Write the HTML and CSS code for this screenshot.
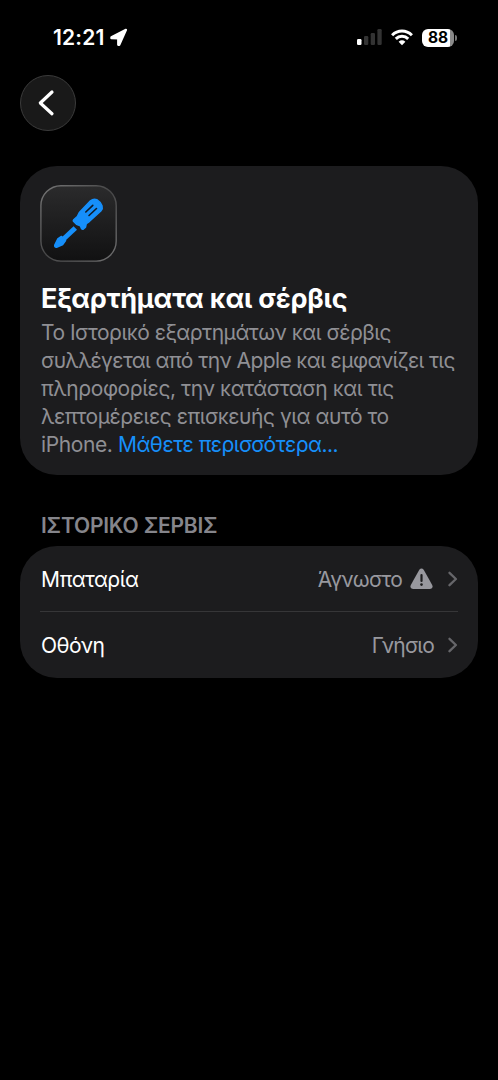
FILE: index.html
```html
<!DOCTYPE html>
<html lang="el">
<head>
<meta charset="utf-8">
<meta name="viewport" content="width=device-width, initial-scale=1">
<title>Εξαρτήματα και σέρβις</title>
<link rel="stylesheet" href="styles.css">
</head>
<body>
<header class="status">
  <div class="status-left">
    <span class="clock">12:21</span>
    <svg class="location" width="18" height="19" viewBox="0 0 18 19"><path d="M1.400 9.200 16 1.800 9.300 16.800 8.200 16.800 8.200 10.400 1.400 10.200Z" fill="#fff" stroke="#fff" stroke-width="2.200" stroke-linejoin="round"/></svg>
  </div>
  <div class="status-right">
    <svg class="signal" width="25" height="17" viewBox="0 0 25 17"><rect y="10" width="4.500" height="6" rx="1.200" fill="#fff"/><g fill="#333"><rect x="7" y="7" width="4.300" height="9" rx="1.200"/><rect x="13.700" y="4" width="4.300" height="12" rx="1.200"/><rect x="20.400" y="0" width="4.300" height="16" rx="1.200"/></g></svg>
    <svg class="wifi" width="22" height="17" viewBox="0 0 22 17"><g fill="none" stroke="#fff" stroke-width="3"><path d="M1.100 6.200Q5.400 2 11 2T20.900 6.200"/><path d="M4.800 9.900Q7.400 7.300 11 7.300T17.200 9.900"/></g><path d="M7.600 12.700Q11 9.900 14.400 12.700L11 16.200Z" fill="#fff"/></svg>
    <div class="battery"><span class="battery-level">88</span></div>
    <span class="battery-tip"></span>
  </div>
</header>
<nav class="nav">
  <button class="back" aria-label="Πίσω"><svg width="54" height="54" viewBox="0 0 54 54"><path d="M31 16 19.300 27 31 37.700" fill="none" stroke="#fff" stroke-width="3.200" stroke-linecap="round" stroke-linejoin="round"/></svg></button>
</nav>
<main class="content">
  <section class="card intro">
    <svg class="app-icon" width="77" height="77" viewBox="0 0 77 77">
      <defs>
        <linearGradient id="face" x1="0" y1="0" x2="0" y2="1"><stop offset="0" stop-color="#2b2b2c"/><stop offset="1" stop-color="#111112"/></linearGradient>
        <linearGradient id="rim" x1="0" y1="0" x2="1" y2="1"><stop offset="0" stop-color="#777"/><stop offset=".5" stop-color="#464647"/><stop offset="1" stop-color="#707071"/></linearGradient>
      </defs>
      <rect x=".9" y=".7" width="75.300" height="75.400" rx="20" fill="url(#face)" stroke="url(#rim)" stroke-width="1.400"/>
      <g fill="#168ffa" stroke="#168ffa" stroke-linejoin="round">
        <path d="M35.300 43 23 54.500" stroke-width="5"/>
        <path d="M21.500 51.500 17.800 54 14.800 60.200Q14.600 62.400 16.500 62.200L22.800 59.400 25.500 55.500Z" stroke-width="1.600"/>
        <path d="M33.500 36.300Q33 35.500 33.700 34.700L37.300 31.500 39.300 27.500 50.500 15.800Q53.500 13.300 56.800 14.700 60.500 17 62 20.700 63 23.400 60.800 26L49 36.800 46.300 38.500 45.500 42.200 43.400 44Q42.400 44.600 41.500 43.500L40.300 40.800 36.500 39.300Z" stroke-width="1.500"/>
      </g>
      <path d="M45.800 27 52.800 20.300M49 30.500 56.500 23.500" stroke="#101a25" stroke-width="1.600" stroke-linecap="round"/>
    </svg>
    <h1 class="title">Εξαρτήματα και σέρβις</h1>
    <p class="description">
      <span class="line line-one">Το Ιστορικό εξαρτημάτων και σέρβις</span>
      <span class="line line-two">συλλέγεται από την Apple και εμφανίζει τις</span>
      <span class="line line-three">πληροφορίες, την κατάσταση και τις</span>
      <span class="line line-four">λεπτομέρειες επισκευής για αυτό το</span>
      <span class="line line-five">iPhone. <a class="link">Μάθετε περισσότερα...</a></span>
    </p>
  </section>
  <h2 class="section-title">ΙΣΤΟΡΙΚΟ ΣΕΡΒΙΣ</h2>
  <section class="card list">
    <div class="row">
      <span class="label">Μπαταρία</span>
      <span class="value">Άγνωστο</span>
      <svg class="warning" width="23" height="22" viewBox="0 0 23 22"><path d="M9.300 1.700Q11.500-.9 13.700 1.700L22.200 17Q23.600 20.600 20 21H3Q-.6 20.600.8 17Z" fill="#98989e"/><path d="M11.500 7v6" stroke="#1d1d1f" stroke-width="2.200" stroke-linecap="round"/><circle cx="11.500" cy="16.600" r="1.300" fill="#1d1d1f"/></svg>
      <svg class="chevron" width="10" height="16" viewBox="0 0 10 16"><path d="M1.500 1.800 7.900 8 1.500 14.200" fill="none" stroke="#66666a" stroke-width="2.300" stroke-linecap="round" stroke-linejoin="round"/></svg>
    </div>
    <div class="row">
      <span class="label">Οθόνη</span>
      <span class="value">Γνήσιο</span>
      <svg class="chevron" width="10" height="16" viewBox="0 0 10 16"><path d="M1.500 1.800 7.900 8 1.500 14.200" fill="none" stroke="#66666a" stroke-width="2.300" stroke-linecap="round" stroke-linejoin="round"/></svg>
    </div>
  </section>
</main>
</body>
</html>
```
FILE: styles.css
```css
* { box-sizing: border-box; }
body {
  margin: 0;
  min-height: 1080px;
  background: #000;
  color: #fff;
  font-family: Inter, "Liberation Sans", sans-serif;
  font-size: 21px;
}
svg { display: block; flex: none; }
.status {
  height: 75px;
  padding: 24px 41px 0 53px;
  display: flex;
  justify-content: space-between;
  align-items: flex-start;
}
.status-left, .status-right { display: flex; align-items: center; height: 27px; }
.clock { font-size: 21px; font-weight: 600; letter-spacing: .2px; line-height: 27px; }
.location { margin-left: 5px; }
.signal { margin-right: 9px; }
.wifi { margin-right: 9px; }
.battery {
  width: 32px;
  height: 18px;
  border-radius: 6px;
  background: linear-gradient(90deg, #fff 88%, #8a8a8a 88%);
  display: flex;
  align-items: center;
  justify-content: center;
}
.battery-level { color: #000; font-size: 15.5px; font-weight: 700; line-height: 18px; }
.battery-tip { width: 2px; height: 6px; margin-left: 1px; border-radius: 0 3px 3px 0; background: #777; }
.nav { padding-left: 20px; height: 91px; }
.back {
  width: 56px;
  height: 56px;
  padding: 0;
  border: 1px solid #3b3b3b;
  border-radius: 50%;
  background: #191919;
}
.content { padding: 0 20px; }
.card { background: #1c1c1e; border-radius: 37px; }
.intro { height: 309px; padding: 19px 20px; }
.title {
  margin: 19px 0 0 1px;
  font-size: 27px;
  font-weight: 700;
  line-height: 36px;
  letter-spacing: -.2px;
  white-space: nowrap;
}
.description { margin: 2px 0 0 1px; color: #8f8f94; line-height: 28px; }
.line { display: block; width: max-content; white-space: nowrap; }
.line-one { letter-spacing: -.49px; }
.line-two { letter-spacing: -.6px; }
.line-three { letter-spacing: -.43px; }
.line-four { letter-spacing: -.46px; }
.line-five { letter-spacing: -.4px; }
.link { color: #168ffa; letter-spacing: -.5px; }
.section-title {
  width: max-content;
  margin: 36px 0 0 21px;
  color: #85858b;
  font-size: 21px;
  font-weight: 600;
  line-height: 30px;
  letter-spacing: -.2px;
}
.list { margin-top: 5px; height: 132px; padding: 0 20px; }
.row { height: 65px; padding-top: 1px; display: flex; align-items: center; }
.row + .row { height: 67px; padding-top: 0; border-top: 1px solid #363638; }
.label { margin-right: auto; padding-left: 1px; letter-spacing: -.55px; }
.value { color: #98989e; letter-spacing: -.8px; }
.warning { margin-left: 8px; }
.chevron { margin-left: 14px; }
.warning + .chevron { margin-left: 15px; }
```
